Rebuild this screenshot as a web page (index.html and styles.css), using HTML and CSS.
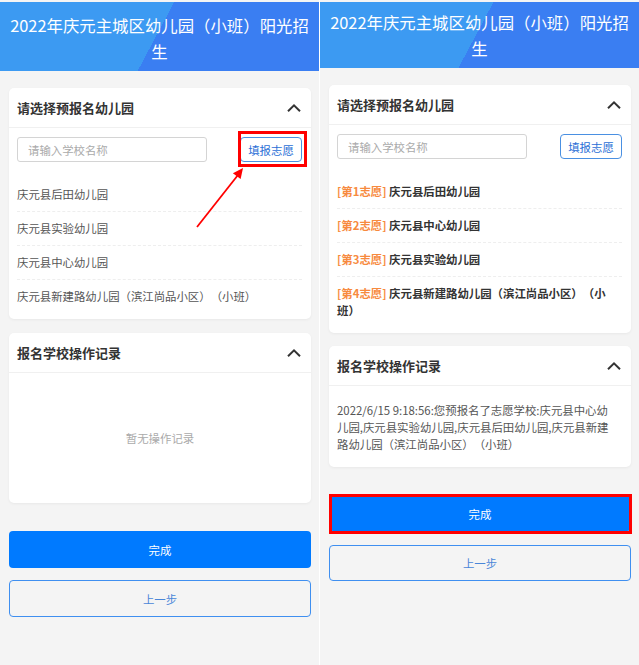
FILE: index.html
```html
<!DOCTYPE html>
<html lang="zh-CN">
<head>
    <title>幼儿园阳光招生</title>
    <meta charset="UTF-8">
    <link rel="stylesheet" href="styles.css">
</head>
<body>
<div class="shots">
    <section class="phone">
        <header class="banner">
            <h1>2022年庆元主城区幼儿园（小班）阳光招生</h1>
        </header>
        <div class="content">
            <div class="card">
                <div class="card-head">
                    <h2>请选择预报名幼儿园</h2>
                    <svg class="chevron" viewBox="0 0 14 8"><path d="M1 7.2 L7 1.4 L13 7.2"/></svg>
                </div>
                <div class="search">
                    <input type="text" class="search-input" placeholder="请输入学校名称">
                    <button class="btn-fill">填报志愿</button>
                </div>
                <ul class="school-list">
                    <li>庆元县后田幼儿园</li>
                    <li>庆元县实验幼儿园</li>
                    <li>庆元县中心幼儿园</li>
                    <li>庆元县新建路幼儿园（滨江尚品小区）（小班）</li>
                </ul>
            </div>
            <div class="card">
                <div class="card-head">
                    <h2>报名学校操作记录</h2>
                    <svg class="chevron" viewBox="0 0 14 8"><path d="M1 7.2 L7 1.4 L13 7.2"/></svg>
                </div>
                <div class="empty">暂无操作记录</div>
            </div>
            <div class="actions">
                <button class="btn btn-primary">完成</button>
                <button class="btn btn-outline">上一步</button>
            </div>
        </div>
        <!-- annotation -->
        <div class="mark mark-fill"></div>
        <svg class="arrow" viewBox="0 0 319 665">
            <line x1="197" y1="227" x2="238" y2="175"/>
            <polygon points="243,168 240.6,179 232.9,173.2"/>
        </svg>
    </section>

    <section class="phone phone-b">
        <header class="banner">
            <h1>2022年庆元主城区幼儿园（小班）阳光招生</h1>
        </header>
        <div class="content">
            <div class="card">
                <div class="card-head">
                    <h2>请选择预报名幼儿园</h2>
                    <svg class="chevron" viewBox="0 0 14 8"><path d="M1 7.2 L7 1.4 L13 7.2"/></svg>
                </div>
                <div class="search">
                    <input type="text" class="search-input" placeholder="请输入学校名称">
                    <button class="btn-fill">填报志愿</button>
                </div>
                <ul class="school-list picked">
                    <li><span class="rank">[第1志愿]</span> 庆元县后田幼儿园</li>
                    <li><span class="rank">[第2志愿]</span> 庆元县中心幼儿园</li>
                    <li><span class="rank">[第3志愿]</span> 庆元县实验幼儿园</li>
                    <li><span class="rank">[第4志愿]</span> 庆元县新建路幼儿园（滨江尚品小区）（小班）</li>
                </ul>
            </div>
            <div class="card">
                <div class="card-head">
                    <h2>报名学校操作记录</h2>
                    <svg class="chevron" viewBox="0 0 14 8"><path d="M1 7.2 L7 1.4 L13 7.2"/></svg>
                </div>
                <div class="record">2022/6/15 9:18:56:您预报名了志愿学校:庆元县中心幼儿园,庆元县实验幼儿园,庆元县后田幼儿园,庆元县新建路幼儿园（滨江尚品小区）（小班）</div>
            </div>
            <div class="actions">
                <button class="btn btn-primary">完成</button>
                <button class="btn btn-outline">上一步</button>
            </div>
        </div>
        <div class="mark mark-done"></div>
    </section>
</div>
</body>
</html>
```

FILE: styles.css
```css
body {
    margin: 0;
    background-color: #fff;
    font-family: "Noto Sans CJK SC", "Noto Sans", sans-serif;
    text-spacing-trim: space-all;
}

.shots {
    display: flex;
    gap: 1px;
    height: 665px;
}

.phone {
    position: relative;
    width: 319px;
    background-color: #f4f4f4;
    overflow: hidden;
}

.banner {
    box-sizing: border-box;
    margin-top: 2px;
    height: 69px;
    padding: 3px 10px 0;
    display: flex;
    align-items: center;
    justify-content: center;
    background: linear-gradient(118deg, #3c9af2 49%, #3a7ef2 49%);
}
.phone-b .banner {
    height: 66px;
    padding-top: 0;
}

h1 {
    margin: 0;
    font-size: 16.4px;
    font-weight: normal;
    line-height: 26px;
    color: #fff;
    text-align: center;
}

.content {
    padding: 0 8px 0 9px;
}

.card {
    margin-top: 17px;
    background-color: #fff;
    border-radius: 5px;
    box-shadow: 0 1px 3px rgba(0, 0, 0, 0.05);
}
.card + .card {
    margin-top: 14px;
}
.phone-b .card + .card {
    margin-top: 13px;
}

.card-head {
    height: 39px;
    padding: 0 10px 0 8px;
    display: flex;
    align-items: center;
    justify-content: space-between;
    border-bottom: 1px solid #f0f0f0;
}

h2 {
    margin: 0;
    font-size: 13px;
    font-weight: bold;
    color: #333;
}

.chevron {
    width: 14px;
    height: 8px;
    fill: none;
    stroke: #333;
    stroke-width: 2;
}

.search {
    padding: 9px 9px 16px 8px;
    display: flex;
    align-items: center;
    justify-content: space-between;
}

.search-input {
    box-sizing: border-box;
    width: 190px;
    height: 25px;
    padding: 0 10px;
    border: 1px solid #d4d4d4;
    border-radius: 3px;
    font: 11.4px "Noto Sans CJK SC", sans-serif;
}
.search-input::placeholder {
    color: #aaa;
}

.btn-fill {
    width: 62px;
    height: 25px;
    padding: 0;
    border: 1px solid #4a90e2;
    border-radius: 4px;
    background-color: #fff;
    color: #2b6fd6;
    font: 11.4px "Noto Sans CJK SC", sans-serif;
}

.school-list {
    list-style: none;
    margin: 0;
    padding: 0 9px 6px 8px;
}
.school-list li {
    padding: 8px 6px 8px 0;
    font-size: 11.4px;
    line-height: 17px;
    color: #555;
    border-bottom: 1px dashed #eee;
}
.school-list li:last-child {
    border-bottom: none;
}

.picked li {
    font-weight: bold;
    color: #333;
}
.rank {
    color: #f78a3e;
}

.empty {
    height: 130px;
    display: flex;
    align-items: center;
    justify-content: center;
    font-size: 11.4px;
    color: #aaa;
}

.record {
    padding: 16px 15px 14px 8px;
    font-size: 11.4px;
    line-height: 17px;
    color: #555;
}

.actions {
    margin-top: 28px;
    display: flex;
    flex-direction: column;
    gap: 12px;
}
.phone-b .actions {
    margin-top: 29px;
    gap: 14px;
}

.btn {
    height: 37px;
    border-radius: 4px;
    font: 11.4px "Noto Sans CJK SC", sans-serif;
}
.phone-b .btn {
    height: 35px;
}
.phone-b .btn-outline {
    height: 36px;
}

.btn-primary {
    border: none;
    background-color: #007aff;
    color: #fff;
}

.btn-outline {
    border: 1px solid #3f8ff0;
    background-color: transparent;
    color: #4a86d8;
}

/* red marks drawn over the shots */
.mark {
    position: absolute;
    box-sizing: border-box;
    border: 3px solid #f00;
    pointer-events: none;
}
.mark-fill {
    left: 238px;
    top: 131px;
    width: 69px;
    height: 36px;
}
.mark-done {
    left: 9px;
    top: 494px;
    width: 303px;
    height: 40px;
}

.arrow {
    position: absolute;
    left: 0;
    top: 0;
    width: 319px;
    height: 665px;
    pointer-events: none;
}
.arrow line {
    stroke: #f00;
    stroke-width: 1.8;
}
.arrow polygon {
    fill: #f00;
}
```
